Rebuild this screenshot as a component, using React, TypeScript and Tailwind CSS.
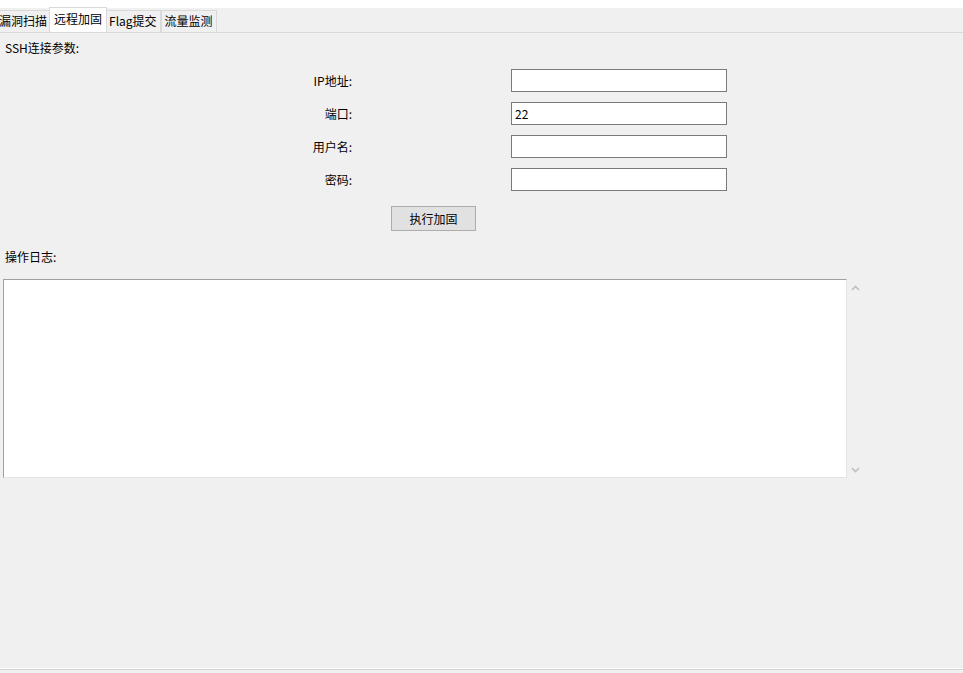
const FONT = { fontFamily: '"Noto Sans CJK SC", "Noto Sans", sans-serif' };

function Tab({ label, active, first }: { label: string; active?: boolean; first?: boolean }) {
  if (active) {
    return (
      <div className="relative z-10 -mx-[2px] flex h-[25px] items-start border border-b-0 border-[#d9d9d9] bg-white px-[4px] pt-[2px] leading-[18px]">
        {label}
      </div>
    );
  }
  return (
    <div
      className={`flex h-[22px] items-start border border-b-0 border-[#d9d9d9] bg-[#f0f0f0] px-[3px] pt-[1px] leading-[18px] ${first ? '-ml-[5px]' : ''}`}
    >
      {label}
    </div>
  );
}

function Field({ label, value }: { label: string; value?: string }) {
  return (
    <div className="flex h-[23px] items-center">
      <div className="w-[352px] text-right">{label}</div>
      <div className="ml-[159px] flex h-[23px] w-[216px] items-center border border-[#7a7a7a] bg-white px-[3px]">
        {value}
      </div>
    </div>
  );
}

function Chevron({ up }: { up?: boolean }) {
  return (
    <svg width="9" height="6" viewBox="0 0 9 6">
      <polyline
        points={up ? '1,5 4.5,1.5 8,5' : '1,1 4.5,4.5 8,1'}
        fill="none"
        stroke="#bfbfbf"
        strokeWidth="1.6"
      />
    </svg>
  );
}

export default function App() {
  return (
    <div className="flex h-[673px] w-[963px] flex-col overflow-hidden bg-[#f0f0f0] text-[12px] text-black" style={FONT}>
      <div className="h-[8px] bg-white" />
      <div className="flex h-[25px] items-end border-b border-[#d9d9d9]">
        <Tab label="漏洞扫描" first />
        <Tab label="远程加固" active />
        <Tab label="Flag提交" />
        <Tab label="流量监测" />
      </div>

      <div className="flex flex-1 flex-col">
        <div className="ml-[5px] mt-[7px] leading-[16px]">SSH连接参数:</div>
        <div className="mt-[13px] flex flex-col gap-[10px]">
          <Field label="IP地址:" />
          <Field label="端口:" value="22" />
          <Field label="用户名:" />
          <Field label="密码:" />
        </div>
        <div className="mt-[15px] flex">
          <button className="ml-[391px] h-[25px] w-[85px] border border-[#adadad] bg-[#e1e1e1] leading-none">
            执行加固
          </button>
        </div>
        <div className="ml-[5px] mt-[18px] leading-[16px]">操作日志:</div>
        <div className="mt-[14px] flex h-[199px]">
          <div className="ml-[3px] w-[844px] border border-b-[#e3e3e3] border-l-[#a0a0a0] border-r-[#e3e3e3] border-t-[#a0a0a0] bg-white" />
          <div className="flex w-[17px] flex-col items-center justify-between pb-[5px] pt-[6px]">
            <Chevron up />
            <Chevron />
          </div>
        </div>
        <div className="flex-1" />
        <div className="h-px bg-white" />
        <div className="h-px bg-[#d4d4d4]" />
        <div className="h-[3px] bg-[#f0f0f0]" />
      </div>
    </div>
  );
}
